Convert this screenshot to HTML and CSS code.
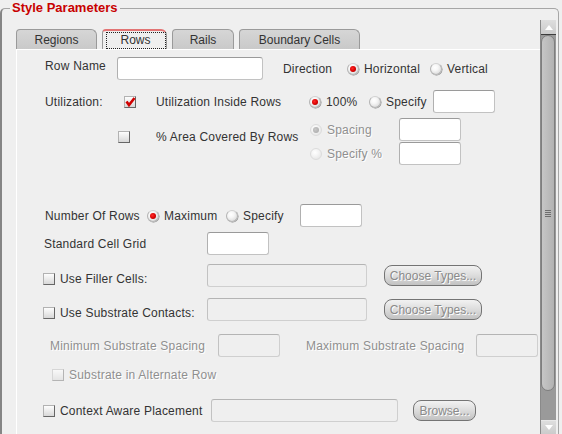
FILE: index.html
```html
<!DOCTYPE html>
<html lang="en">
<head>
<meta charset="utf-8">
<title>Style Parameters</title>
<link rel="stylesheet" href="styles.css">
</head>
<body>
<fieldset class="group">
  <legend class="group-title">Style Parameters</legend>
  <div class="scrollpane">
    <div class="viewport">
      <div class="tabs">
        <div class="tab t-regions">Regions</div>
        <div class="tab sel t-rows"><span class="focus">Rows</span></div>
        <div class="tab t-rails">Rails</div>
        <div class="tab t-boundary">Boundary Cells</div>
      </div>
      <div class="panel">
        <div class="row r1 pl2">
          <span class="lbl w72 lift">Row Name</span>
          <input class="field w146" type="text">
          <span class="lbl w64 ml20">Direction</span>
          <span class="opt w83"><span class="radio on"></span>Horizontal</span>
          <span class="opt"><span class="radio"></span>Vertical</span>
        </div>

        <div class="row r2 pl2">
          <span class="lbl w79">Utilization:</span>
          <span class="chk-cell w32"><span class="chk"><svg viewBox="0 0 12 12" width="12" height="12"><polyline points="2.5,5.5 5,9 10.5,2" fill="none" stroke="#d00000" stroke-width="2.6"/></svg></span></span>
          <span class="lbl w153">Utilization Inside Rows</span>
          <span class="opt w60"><span class="radio on"></span>100%</span>
          <span class="opt w64"><span class="radio"></span>Specify</span>
          <input class="field w62" type="text">
        </div>

        <div class="row r3">
          <div class="area">
            <span class="chk-cell w38"><span class="chk"></span></span>
            <span class="lbl w154">% Area Covered By Rows</span>
          </div>
          <div class="area-opts">
            <div class="subrow">
              <span class="opt w89 dis"><span class="radio on dis"></span>Spacing</span>
              <input class="field w62" type="text">
            </div>
            <div class="subrow">
              <span class="opt w89 dis"><span class="radio dis"></span>Specify %</span>
              <input class="field w62" type="text">
            </div>
          </div>
        </div>

        <div class="row r4 pl2">
          <span class="lbl w102">Number Of Rows</span>
          <span class="opt w79"><span class="radio on"></span>Maximum</span>
          <span class="opt w74"><span class="radio"></span>Specify</span>
          <input class="field w62" type="text">
        </div>

        <div class="row r5 pl1">
          <span class="lbl w163">Standard Cell Grid</span>
          <input class="field w62" type="text">
        </div>

        <div class="row r6">
          <span class="chk-cell w17 drop"><span class="chk"></span></span>
          <span class="lbl w147 drop">Use Filler Cells:</span>
          <input class="field w160" type="text" disabled>
          <button class="btn w98 ml17" type="button" disabled>Choose Types...</button>
        </div>

        <div class="row r7">
          <span class="chk-cell w17 drop"><span class="chk"></span></span>
          <span class="lbl w147 drop">Use Substrate Contacts:</span>
          <input class="field w160" type="text" disabled>
          <button class="btn w98 ml17" type="button" disabled>Choose Types...</button>
        </div>

        <div class="row r8 pl7">
          <span class="lbl w168 dis">Minimum Substrate Spacing</span>
          <input class="field w62" type="text" disabled>
          <span class="lbl w170 ml26 dis">Maximum Substrate Spacing</span>
          <input class="field w62" type="text" disabled>
        </div>

        <div class="row r9 pl9">
          <span class="chk-cell w17"><span class="chk dis"></span></span>
          <span class="lbl dis">Substrate in Alternate Row</span>
        </div>

        <div class="row r10">
          <span class="chk-cell w17"><span class="chk"></span></span>
          <span class="lbl w151">Context Aware Placement</span>
          <input class="field w187" type="text" disabled>
          <button class="btn w63 ml15" type="button" disabled>Browse...</button>
        </div>
      </div>
    </div>

    <div class="scrollbar">
      <div class="sb-btn sb-up"><svg width="8" height="5" viewBox="0 0 8 5"><polygon points="0,5 4,0 8,5" fill="#ffffff"/></svg></div>
      <div class="sb-track">
        <div class="sb-thumb"><span class="grip"></span></div>
      </div>
      <div class="sb-btn sb-down"><svg width="8" height="5" viewBox="0 0 8 5"><polygon points="0,0 8,0 4,5" fill="#ffffff"/></svg></div>
    </div>
  </div>
</fieldset>
</body>
</html>
```
FILE: styles.css
```css
* { box-sizing: border-box; }

html, body {
  margin: 0;
  height: 434px;
  overflow: hidden;
}

body {
  background: #efefef;
  font-family: "Liberation Sans", Arial, sans-serif;
  font-size: 12px;
  letter-spacing: 0.2px;
  color: #333333;
}

/* Titled group frame */
.group {
  margin: 0;
  padding: 0;
  width: 559px;
  height: 434px;
  min-width: 0;
  border: 1px solid #a6a6a6;
  border-left: 2px solid #858585;
  border-bottom: none;
  border-radius: 5px 5px 0 0;
  overflow: hidden;
}

.group-title {
  margin-left: 8px;
  padding: 0 2px;
  font-size: 13px;
  font-weight: bold;
  letter-spacing: 0;
  line-height: 16px;
  color: #c80000;
}

.scrollpane {
  display: flex;
  margin-top: 4px;
  padding-right: 2px;
  height: 414px;
}

.viewport {
  flex: 1;
  padding: 9px 0 0 14px;
  min-width: 0;
}

/* Tabs */
.tabs {
  display: flex;
  gap: 5px;
  height: 20px;
  letter-spacing: 0;
}

.tab {
  height: 20px;
  display: flex;
  align-items: center;
  justify-content: center;
  background: linear-gradient(#d6d6d6, #c9c9c9);
  border: 1px solid #9a9a9a;
  border-bottom: none;
  border-radius: 4px 6px 0 0;
  white-space: nowrap;
}

.t-regions { width: 81px; }
.t-rows { width: 65px; }
.t-rails { width: 62px; }
.t-boundary { width: 121px; }

.tab.sel {
  background: #efefef;
  border-top: 2px solid #e27474;
  padding: 0 0 0 2px;
}

.focus {
  display: flex;
  align-items: center;
  justify-content: center;
  width: 60px;
  height: 17px;
  border: 1px dotted #222222;
}

/* Tab content panel */
.panel {
  border-top: 1px solid #ffffff;
  border-left: 1px solid #ffffff;
  padding-left: 26px;
  height: 385px;
}

.row {
  display: flex;
  align-items: center;
  height: 23px;
}

.r1 { margin-top: 7px; }
.r2 { margin-top: 10px; }
.r3 { margin-top: 5px; height: 47px; align-items: flex-start; }
.r4 { margin-top: 39px; }
.r5 { margin-top: 5px; }
.r6 { margin-top: 9px; }
.r7 { margin-top: 11px; }
.r8 { margin-top: 13px; }
.r9 { margin-top: 6px; }
.r10 { margin-top: 13px; }

.area {
  display: flex;
  align-items: center;
  height: 23px;
  margin-top: 7px;
  margin-left: 75px;
}

.area-opts {
  display: flex;
  flex-direction: column;
  gap: 1px;
}

.subrow {
  display: flex;
  align-items: center;
  height: 23px;
}

.pl1 { padding-left: 1px; }
.pl2 { padding-left: 2px; }
.pl7 { padding-left: 7px; }
.pl9 { padding-left: 9px; }

.ml15 { margin-left: 15px; }
.ml17 { margin-left: 17px; }
.ml20 { margin-left: 20px; }
.ml26 { margin-left: 26px; }

.w17 { width: 17px; }
.w32 { width: 32px; }
.w38 { width: 38px; }
.w60 { width: 60px; }
.w62 { width: 62px; }
.w63 { width: 63px; }
.w64 { width: 64px; }
.w72 { width: 72px; }
.w74 { width: 74px; }
.w79 { width: 79px; }
.w83 { width: 83px; }
.w89 { width: 89px; }
.w98 { width: 98px; }
.w102 { width: 102px; }
.w146 { width: 146px; }
.w147 { width: 147px; }
.w151 { width: 151px; }
.w153 { width: 153px; }
.w154 { width: 154px; }
.w160 { width: 160px; }
.w163 { width: 163px; }
.w168 { width: 168px; }
.w170 { width: 170px; }
.w187 { width: 187px; }

.lbl {
  flex: none;
  white-space: nowrap;
}

.lift { margin-bottom: 5px; }
.drop { margin-top: 7px; }

.dis {
  color: #8f8f8f;
  text-shadow: 1px 1px 0 #ffffff;
}

/* Text fields */
.field {
  flex: none;
  height: 23px;
  margin: 0;
  padding: 0 3px;
  font: inherit;
  background: #ffffff;
  border: 1px solid #c2c2c2;
  border-top-color: #9a9a9a;
  border-left-color: #b0b0b0;
  border-radius: 3px;
  outline: none;
}

.field:disabled {
  background: #efefef;
  border-color: #cfcfcf;
  border-top-color: #b4b4b4;
  border-left-color: #c2c2c2;
}

/* Radio options */
.opt {
  display: flex;
  align-items: center;
  gap: 5px;
  flex: none;
  white-space: nowrap;
}

.radio {
  flex: none;
  width: 12px;
  height: 12px;
  border-radius: 50%;
  border: 1px solid #b4b4b4;
  border-top-color: #d2d2d2;
  background: radial-gradient(circle at 40% 35%, #ffffff 0, #f6f6f6 35%, #cfcfcf 100%);
  box-shadow: 0.5px 0.5px 0 #8c8c8c;
  display: flex;
  align-items: center;
  justify-content: center;
}

.radio.on::after {
  content: "";
  width: 6px;
  height: 6px;
  border-radius: 50%;
  background: radial-gradient(circle at 40% 40%, #ff2a2a 0, #d80000 55%, #8a0000 100%);
}

.radio.dis {
  border-color: #dcdcdc;
  background: radial-gradient(circle at 40% 35%, #ffffff 0, #f4f4f4 40%, #e0e0e0 100%);
  box-shadow: none;
}

.radio.on.dis::after {
  background: radial-gradient(circle at 40% 40%, #c8c8c8, #a6a6a6);
}

/* Check boxes */
.chk-cell {
  flex: none;
  display: flex;
  align-items: center;
}

.chk {
  width: 12px;
  height: 12px;
  display: block;
  background: linear-gradient(#fdfdfd, #d8d8d8);
  border: 1px solid #b2b2b2;
  border-right-color: #666666;
  border-bottom-color: #666666;
  overflow: visible;
}

.chk svg {
  display: block;
  margin: -1px 0 0 -1px;
  overflow: visible;
}

.chk.dis {
  background: linear-gradient(#f8f8f8, #e4e4e4);
  border-color: #d6d6d6;
  border-right-color: #b4b4b4;
  border-bottom-color: #b4b4b4;
}

/* Buttons */
.btn {
  flex: none;
  height: 21px;
  margin-top: 0;
  padding: 0;
  font: inherit;
  color: #8a8a8a;
  text-shadow: 1px 1px 0 #ffffff;
  background: linear-gradient(#f2f2f2, #dcdcdc 50%, #c2c2c2);
  border: 1px solid #747474;
  border-radius: 8px;
  white-space: nowrap;
}

/* Scrollbar */
.scrollbar {
  flex: none;
  width: 16px;
  display: flex;
  flex-direction: column;
  background: #9a9a9a;
  border-left: 1px solid #8a8a8a;
}

.sb-btn {
  flex: none;
  display: flex;
  align-items: center;
  justify-content: center;
  background: linear-gradient(#dedede, #cbcbcb);
}

.sb-up {
  height: 15px;
  border-bottom: 1px solid #3c3c3c;
}

.sb-down {
  height: 14px;
  border-top: 1px solid #e8e8e8;
  align-items: flex-start;
  padding-top: 4px;
}

.sb-track {
  flex: 1;
  display: flex;
  flex-direction: column;
}

.sb-thumb {
  height: 356px;
  margin: 0 1px 0 0;
  background: linear-gradient(to right, #c6c6c6, #b2b2b2);
  border: 1px solid #7e7e7e;
  border-radius: 7px;
  display: flex;
  align-items: center;
  justify-content: center;
}

.grip {
  width: 6px;
  height: 7px;
  background: repeating-linear-gradient(#6e6e6e 0 1px, transparent 1px 2px);
}
```
